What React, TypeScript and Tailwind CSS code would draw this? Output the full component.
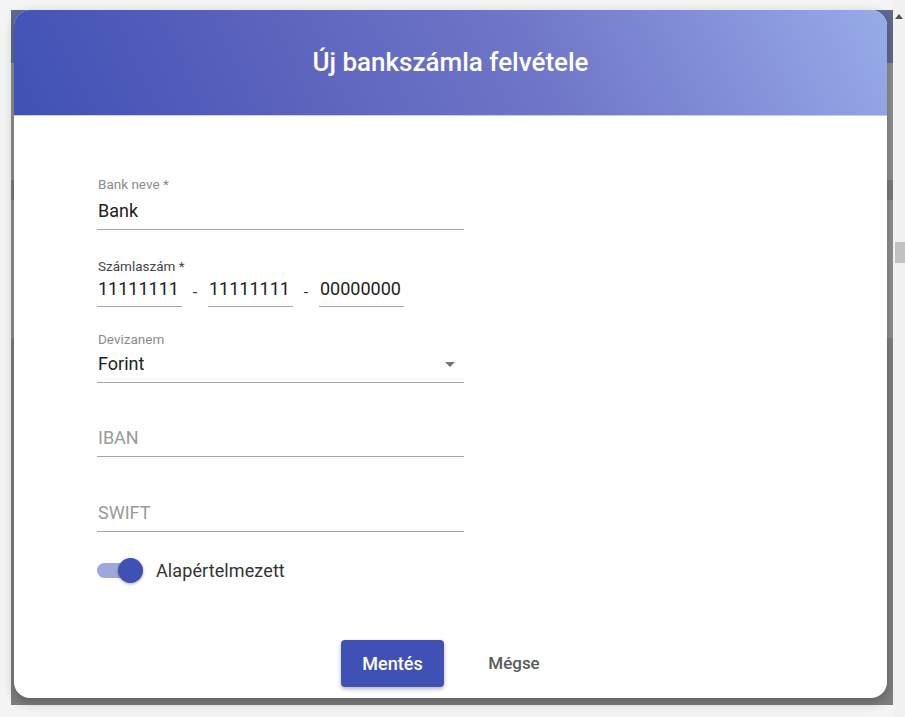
import React from 'react';

function Field({
  label,
  value,
  placeholder,
  gap = 6,
  right,
}: {
  label?: string;
  value?: string;
  placeholder?: string;
  gap?: number;
  right?: React.ReactNode;
}) {
  return (
    <div className="w-[367px] border-b border-[#a6a6a6] pb-[6px]">
      <div className="h-[16px] leading-[16px] text-[13.5px] text-[#8c8c8c] pl-[1px]">{label}</div>
      <div
        className={`flex items-center justify-between h-[24px] leading-[24px] text-[18px] pl-[1px] ${
          gap === 5 ? 'mt-[5px]' : 'mt-[7px]'
        }`}
      >
        {value ? (
          <span className="text-[#212121]">{value}</span>
        ) : (
          <span className="text-[#9a9a9a]">{placeholder}</span>
        )}
        {right}
      </div>
    </div>
  );
}

function AccountPart({ value }: { value: string }) {
  return (
    <div className="w-[85px] h-[30px] border-b border-[#a6a6a6] pl-[1px] leading-[24px] text-[18px] text-[#212121]">
      {value}
    </div>
  );
}

export default function App() {
  return (
    <div className="flex w-[905px] h-[717px] bg-[#f4f4f4] font-['Roboto',sans-serif] overflow-hidden">
      {/* dimmed page behind dialog */}
      <div className="pt-[10px] pl-[11px] pb-[12px]">
        <div className="w-[882px] h-[695px] pl-[3px] pr-[6px] pb-[7px] bg-[linear-gradient(to_bottom,#5f6a91_0px,#5f6a91_53px,#8f8f8f_53px,#8f8f8f_170px,#7c7c7c_170px,#7c7c7c_190px,#909090_190px,#909090_328px,#7e7e7e_328px)]">
          {/* Dialog */}
          <div className="w-[873px] h-[688px] flex flex-col bg-white rounded-[16px] overflow-hidden shadow-[0_4px_12px_rgba(0,0,0,0.25)]">
            <div className="h-[106px] shrink-0 flex items-center justify-center border-b border-[#c7cdf0] bg-[linear-gradient(65deg,#3f51b5_0%,#5a62bd_30%,#7077c8_60%,#97abe9_100%)]">
              <h1 className="text-[26px] font-medium text-white">Új bankszámla felvétele</h1>
            </div>

            <div className="pl-[83px] pt-[60px]">
              <Field label="Bank neve *" value="Bank" />

              {/* Account number */}
              <div className="mt-[28px]">
                <div className="h-[16px] leading-[16px] text-[13.5px] text-[#444444] pl-[1px]">
                  Számlaszám *
                </div>
                <div className="mt-[3px] flex">
                  <AccountPart value="11111111" />
                  <div className="w-[26px] h-[24px] flex items-end justify-center text-[16px] leading-none text-[#333333]">
                    -
                  </div>
                  <AccountPart value="11111111" />
                  <div className="w-[26px] h-[24px] flex items-end justify-center text-[16px] leading-none text-[#333333]">
                    -
                  </div>
                  <AccountPart value="00000000" />
                </div>
              </div>

              <div className="mt-[24px]">
                <Field
                  label="Devizanem"
                  value="Forint"
                  gap={5}
                  right={
                    <svg width="10" height="5" viewBox="0 0 10 5" className="mr-[9px]">
                      <path d="M0 0 L10 0 L5 5 Z" fill="#757575" />
                    </svg>
                  }
                />
              </div>

              <div className="mt-[22px]">
                <Field placeholder="IBAN" gap={5} />
              </div>

              <div className="mt-[23px]">
                <Field placeholder="SWIFT" gap={5} />
              </div>

              {/* Default toggle */}
              <div className="mt-[25px] h-[26px] flex items-center">
                <div className="relative w-[48px] h-[26px] flex items-center">
                  <div className="w-[43px] h-[15px] rounded-full bg-[#9fa8da]" />
                  <div className="absolute left-[21px] top-[1px] w-[25px] h-[25px] rounded-full bg-[#3f51b5] shadow-[0_1px_3px_rgba(0,0,0,0.35)]" />
                </div>
                <span className="ml-[11px] text-[18px] text-[#333333] tracking-[0.1px]">Alapértelmezett</span>
              </div>
            </div>

            {/* Actions */}
            <div className="mt-[57px] flex justify-center">
              <button className="w-[103px] h-[47px] rounded-[4px] bg-[#3f51b5] text-white text-[18px] font-medium shadow-[0_2px_4px_rgba(0,0,0,0.3)]">
                Mentés
              </button>
              <button className="ml-[24px] w-[92px] h-[47px] rounded-[4px] text-[#5a5a5a] text-[17px] font-medium">
                Mégse
              </button>
            </div>
          </div>
        </div>
      </div>

      {/* scrollbar */}
      <div className="w-[12px] h-full bg-[#f1f1f1] flex flex-col items-end">
        <svg width="8" height="5" viewBox="0 0 8 5" className="mt-[14px] mr-[2px]">
          <path d="M0 5 L4 0 L8 5 Z" fill="#505050" />
        </svg>
        <div className="mt-[223px] w-[10px] h-[21px] bg-[#c1c1c1]" />
      </div>
    </div>
  );
}
